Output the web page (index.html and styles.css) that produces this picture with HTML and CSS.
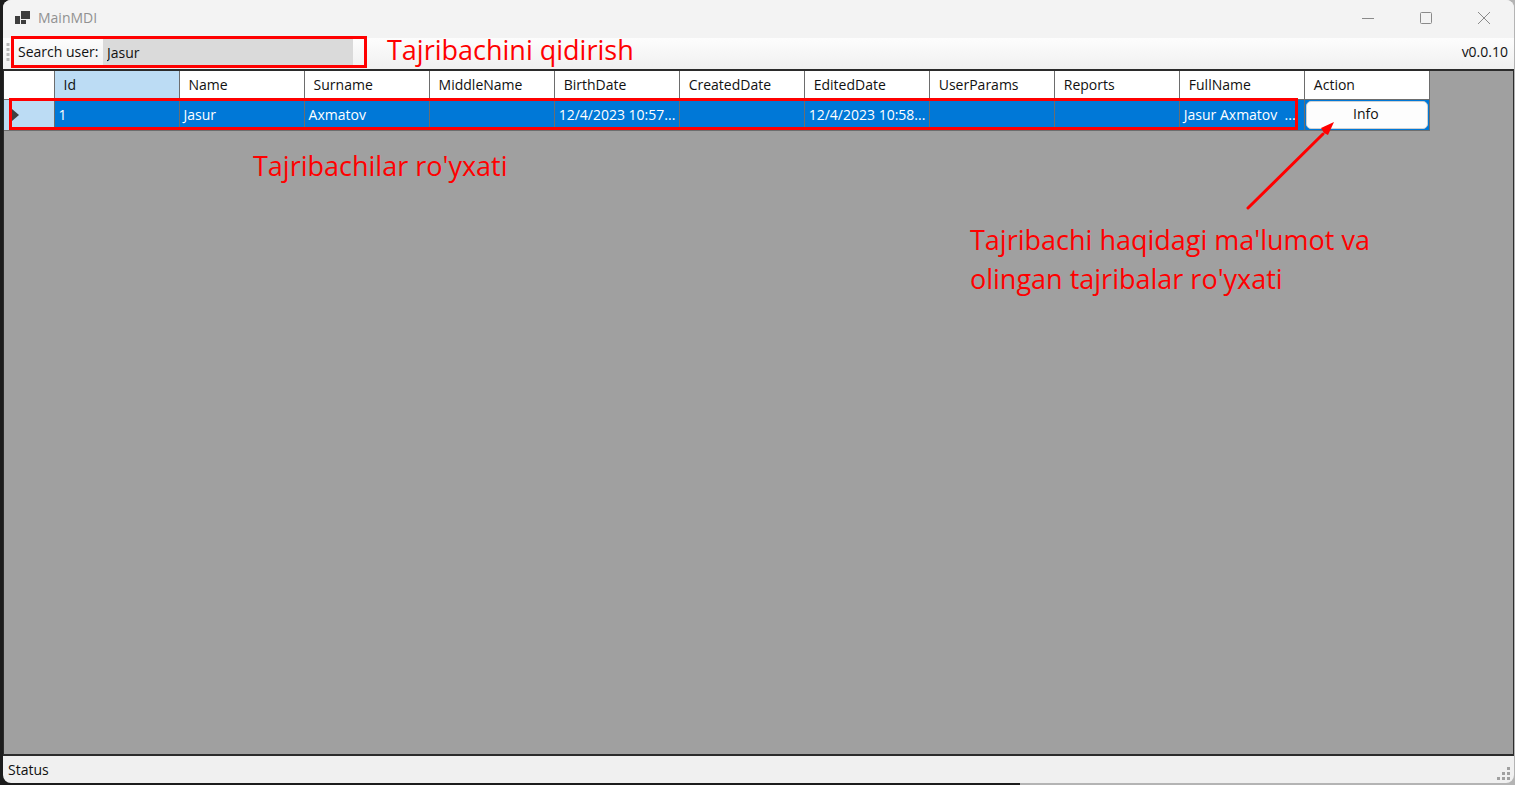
FILE: index.html
```html
<!DOCTYPE html>
<html lang="uz">
<head>
<meta charset="utf-8">
<title>MainMDI</title>
<link rel="stylesheet" href="styles.css">
</head>
<body>
<div class="window">
  <header class="titlebar">
    <svg class="app-icon" width="16" height="16" viewBox="0 0 16 16"><g fill="#3c3c3c"><rect x="0" y="6" width="5" height="8"/><rect x="6" y="1" width="9" height="8"/><rect x="6" y="10" width="5" height="4"/></g></svg>
    <h1 class="title">MainMDI</h1>
    <button class="caption" aria-label="Minimize"><svg width="14" height="14" viewBox="0 0 14 14"><path d="M1 7.500H13"/></svg></button>
    <button class="caption" aria-label="Maximize"><svg width="14" height="14" viewBox="0 0 14 14"><rect x="1.500" y="1.500" width="11" height="11" rx="1"/></svg></button>
    <button class="caption" aria-label="Close"><svg width="14" height="14" viewBox="0 0 14 14"><path d="M1 1L13 13M13 1L1 13"/></svg></button>
  </header>
  <div class="toolbar">
    <svg class="grip" width="4" height="20" viewBox="0 0 4 20"><path d="M2 1V20" stroke="#b8b8b8" stroke-width="3" stroke-dasharray="3 2"/></svg>
    <div class="search">
      <label for="user">Search user:</label>
      <input id="user" type="text" value="Jasur">
    </div>
    <p class="note note-search">Tajribachini qidirish</p>
    <span class="version">v0.0.10</span>
  </div>
  <main class="client">
    <table class="grid">
      <colgroup><col class="col-head"><col><col><col><col><col><col><col><col><col><col><col></colgroup>
      <thead>
        <tr><th></th><th class="current">Id</th><th>Name</th><th>Surname</th><th>MiddleName</th><th>BirthDate</th><th>CreatedDate</th><th>EditedDate</th><th>UserParams</th><th>Reports</th><th>FullName</th><th>Action</th></tr>
      </thead>
      <tbody>
        <tr><td class="row-head"><svg width="7" height="12" viewBox="0 0 7 12"><path d="M0 0L7 6L0 12Z" fill="#404040"/></svg></td><td>1</td><td>Jasur</td><td>Axmatov</td><td></td><td>12/4/2023 10:57...</td><td></td><td>12/4/2023 10:58...</td><td></td><td></td><td>Jasur Axmatov &nbsp;...</td><td class="action"><button class="info">Info</button></td></tr>
      </tbody>
    </table>
    <div class="row-mark"></div>
    <p class="note note-list">Tajribachilar ro'yxati</p>
    <p class="note note-info">Tajribachi haqidagi ma'lumot va<br>olingan tajribalar ro'yxati</p>
    <svg class="arrow" width="92" height="92" viewBox="0 0 92 92"><path d="M4 87L79 13" stroke="#f00" stroke-width="3" stroke-linecap="round"/><path d="M90 1L84 14L80 12L77 7Z" fill="#f00"/></svg>
  </main>
  <footer class="status">
    <span>Status</span>
    <svg class="size-grip" width="14" height="14" viewBox="0 0 14 14"><g fill="#a0a0a0"><rect x="10" y="0" width="3" height="3"/><rect x="5" y="5" width="3" height="3"/><rect x="10" y="5" width="3" height="3"/><rect x="0" y="10" width="3" height="3"/><rect x="5" y="10" width="3" height="3"/><rect x="10" y="10" width="3" height="3"/></g></svg>
  </footer>
</div>
</body>
</html>
```
FILE: styles.css
```css
* { box-sizing: border-box; }
body {
  margin: 0;
  height: 100vh;
  padding: 0 1px 2px 3px;
  overflow: hidden;
  background: linear-gradient(to right, #1c1c1c 1020px, #b4b4b4 1020px);
  font: 14px/20px "Open Sans", "Noto Sans", sans-serif;
  color: #111;
}
button, input { font: inherit; color: inherit; }
.window {
  height: 100%;
  display: flex;
  flex-direction: column;
  background: #f0f0f0;
  border-radius: 8px;
  overflow: hidden;
}
.titlebar {
  flex: none;
  height: 36px;
  display: flex;
  align-items: center;
  padding: 0 1px 0 12px;
  background: #f3f3f3;
}
.title {
  flex: 1;
  margin: 0 0 0 7px;
  font-size: 14px;
  font-weight: 400;
  color: #919191;
}
.caption {
  width: 58px;
  height: 36px;
  padding: 0;
  border: 0;
  background: none;
  display: grid;
  place-items: center;
}
.caption svg { fill: none; stroke: #8a8a8a; }
.toolbar {
  flex: none;
  height: 33px;
  display: flex;
  align-items: center;
  padding: 0 6px 1px 3px;
  background: linear-gradient(#f3f3f3 2px, #fdfdfd 2px, #f0f0f0);
}
.grip { margin-right: 1px; }
.search {
  width: 356px;
  height: 32px;
  display: flex;
  align-items: center;
  border: 3px solid #f00;
  padding: 0 11px 0 4px;
}
.search label { flex: none; width: 85px; line-height: 22px; }
.search input {
  flex: 1;
  min-width: 0;
  height: 26px;
  padding: 0 4px;
  border: 0;
  outline: 0;
  background: #dadada;
}
.note {
  margin: 0;
  font: 400 27px/39px "Open Sans", "Noto Sans", sans-serif;
  color: #f00;
  white-space: nowrap;
}
.note-search { margin: 0 0 4px 20px; line-height: 28px; }
.version { margin-left: auto; }
.client {
  flex: 1;
  position: relative;
  background: #a0a0a0;
  border: 2px solid #2b2b2b;
  border-left-width: 1px;
  border-right-width: 1px;
}
.grid {
  width: 1426px;
  table-layout: fixed;
  border-collapse: collapse;
}
.grid col { width: 125px; }
.grid .col-head { width: 50px; }
.grid th {
  height: 28px;
  padding: 0 9px;
  font-weight: 400;
  text-align: left;
  background: #fff;
  border: 1px solid #6d6d6d;
  border-top: 0;
  border-left-width: 0;
}
.grid .current, .grid .row-head { background: #bcdcf4; }
.grid td {
  height: 31px;
  padding: 0 4px;
  color: #fff;
  background: #0078d7;
  border: 1px solid #6d6d6d;
  border-left-width: 0;
  white-space: nowrap;
}
.grid .row-head { padding-left: 8px; }
.grid .row-head svg { display: block; }
.grid .action { padding: 1px; }
.info {
  display: block;
  width: 100%;
  height: 28px;
  padding: 0 2px 2px 0;
  border: 1px solid #d0d0d0;
  border-radius: 5px;
  background: #fdfdfd;
  color: #111;
}
.row-mark {
  position: absolute;
  left: 5px;
  top: 27px;
  width: 1289px;
  height: 32px;
  border: 3px solid #f00;
}
.note-list { position: absolute; left: 249px; top: 75px; }
.note-info { position: absolute; left: 966px; top: 149px; }
.arrow { position: absolute; left: 1240px; top: 50px; }
.status {
  flex: none;
  height: 27px;
  display: flex;
  align-items: center;
  justify-content: space-between;
  padding: 0 3px 0 5px;
}
.size-grip { margin-top: 8px; }
```
